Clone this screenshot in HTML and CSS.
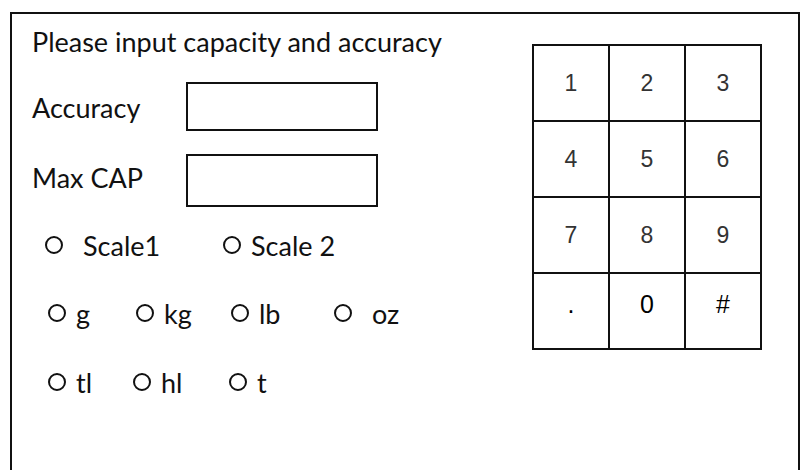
FILE: index.html
```html
<!DOCTYPE html>
<html lang="en">
<head>
    <meta charset="UTF-8">
    <meta name="viewport" content="width=device-width, initial-scale=1.0">
    <title>Capacity and Accuracy</title>
    <link rel="stylesheet" href="styles.css">
</head>
<body>

<div class="panel">
    <div class="setup">
        <div class="title">Please input capacity and accuracy</div>

        <div class="field field-acc">
            <label class="field-label" for="accuracy">Accuracy</label>
            <input class="field-box" type="text" id="accuracy">
        </div>
        <div class="field field-cap">
            <label class="field-label" for="maxcap">Max CAP</label>
            <input class="field-box" type="text" id="maxcap">
        </div>

        <div class="options scales">
            <label class="opt"><span class="dot"></span><span class="opt-text wide">Scale1</span></label>
            <label class="opt"><span class="dot"></span><span class="opt-text">Scale 2</span></label>
        </div>
        <div class="options units">
            <label class="opt"><span class="dot"></span><span class="opt-text">g</span></label>
            <label class="opt"><span class="dot"></span><span class="opt-text">kg</span></label>
            <label class="opt"><span class="dot"></span><span class="opt-text">lb</span></label>
            <label class="opt"><span class="dot"></span><span class="opt-text wide">oz</span></label>
        </div>
        <div class="options volumes">
            <label class="opt"><span class="dot"></span><span class="opt-text">tl</span></label>
            <label class="opt"><span class="dot"></span><span class="opt-text">hl</span></label>
            <label class="opt"><span class="dot"></span><span class="opt-text">t</span></label>
        </div>
    </div>

    <div class="keypad" id="keypad"></div>
</div>

<script>
    // Build the keypad buttons
    const keys = ['1', '2', '3', '4', '5', '6', '7', '8', '9', '.', '0', '#'];
    const pad = document.getElementById('keypad');

    keys.forEach((key, i) => {
        const cell = document.createElement('div');
        cell.className = 'key';
        if (i >= 9) {
            cell.classList.add('key-last');
        }
        cell.textContent = key;
        pad.appendChild(cell);
    });
</script>

</body>
</html>
```

FILE: styles.css
```css
body {
    margin: 0;
    background-color: #fff;
    font-family: Lato, "Open Sans", sans-serif;
    color: #111;
}
.panel {
    display: flex;
    margin: 12px 0 0 10px;
    width: 790px;
    height: 470px;
    box-sizing: border-box;
    border: 2px solid #111;
    border-bottom: none;
}
.setup {
    padding: 8px 0 0 20px;
    width: 480px;
}
.title {
    font-size: 27px;
    line-height: 40px;
}
.field {
    display: flex;
    align-items: flex-start;
}
.field-acc {
    margin-top: 20px;
}
.field-cap {
    margin-top: 23px;
}
.field-label {
    width: 154px;
    margin-top: 10px;
    font-size: 27px;
    line-height: 32px;
}
.field-cap .field-label {
    margin-top: 8px;
}
.field-box {
    width: 192px;
    height: 49px;
    box-sizing: border-box;
    border: 2px solid #111;
    margin: 0;
    padding: 0;
}
.field-cap .field-box {
    height: 53px;
}
.options {
    display: grid;
    height: 36px;
    align-items: center;
    font-size: 27px;
}
.scales {
    margin-top: 20px;
    padding-left: 13px;
    grid-template-columns: 178px auto;
}
.units {
    margin-top: 32px;
    padding-left: 16px;
    grid-template-columns: 88px 95px 103px auto;
}
.volumes {
    margin-top: 33px;
    padding-left: 16px;
    grid-template-columns: 85px 96px auto;
}
.opt {
    display: flex;
    align-items: center;
    line-height: 36px;
}
.dot {
    flex-shrink: 0;
    width: 18px;
    height: 18px;
    box-sizing: border-box;
    border: 2px solid #111;
    border-radius: 50%;
    margin-right: 10px;
}
.opt-text {
    position: relative;
    top: 1px;
}
.opt-text.wide {
    margin-left: 10px;
}
.keypad {
    display: grid;
    grid-template-columns: repeat(3, 76px);
    grid-auto-rows: 76px;
    margin: 30px 0 0 20px;
    align-self: flex-start;
    border-left: 2px solid #111;
    border-top: 2px solid #111;
}
.key {
    display: flex;
    align-items: center;
    justify-content: center;
    border-right: 2px solid #111;
    border-bottom: 2px solid #111;
    font-family: "Liberation Sans", Arial, sans-serif;
    font-size: 23px;
    color: #333;
}
.key-last {
    align-items: flex-start;
    padding-top: 16px;
    font-size: 25px;
    color: #000;
}
```
